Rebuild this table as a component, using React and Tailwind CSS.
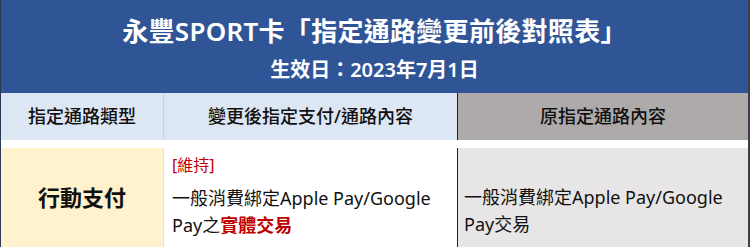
import React from "react";

const App = () => {
  return (
    <div className="w-[750px] h-[247px] overflow-hidden bg-white border-l border-l-[#2a3a55] border-r-2 border-r-[#3a3f4a] flex flex-col font-['Noto_Sans','Noto_Sans_CJK_TC',sans-serif]">
      {/* Title banner */}
      <div className="h-[93px] bg-[#2f5597] text-white flex flex-col items-center shrink-0">
        <h1 className="mt-[14px] text-[26px] leading-[35px] font-semibold tracking-[0.3px]">
          永豐SPORT卡「指定通路變更前後對照表」
        </h1>
        <p className="mt-[8px] text-[20px] leading-[26px] font-semibold">
          生效日：2023年7月1日
        </p>
      </div>

      {/* Table */}
      <div className="grid grid-cols-[162px_294px_1fr] flex-1">
        <div className="h-[47px] bg-[#dde7f3] flex items-center justify-center text-[18px] font-medium text-[#111]">
          指定通路類型
        </div>
        <div className="h-[47px] bg-[#dde7f3] border-l border-[#c5d2e2] flex items-center justify-center text-[18px] font-medium text-[#111]">
          變更後指定支付/通路內容
        </div>
        <div className="h-[47px] bg-[#aeaaaa] border-l border-[#222] flex items-center justify-center text-[18px] font-medium text-[#111]">
          原指定通路內容
        </div>

        <div className="bg-[#fff2cc] flex items-center justify-center text-[22px] font-semibold text-[#111]">
          行動支付
        </div>
        <div className="bg-white border-l border-[#e3e3e3] pl-[8px] pt-[7px] text-[#111]">
          <p className="text-[16px] leading-[20px] text-[#c00000]">[維持]</p>
          <p className="mt-[10px] text-[18px] leading-[27px]">
            一般消費綁定Apple Pay/Google
            <br />
            Pay之<span className="text-[#c00000] font-semibold">實體交易</span>
          </p>
        </div>
        <div className="bg-[#e7e5e6] border-l border-[#222] pl-[6px] pt-[36px] text-[18px] leading-[27px] text-[#111]">
          一般消費綁定Apple Pay/Google
          <br />
          Pay交易
        </div>
      </div>
    </div>
  );
};

export default App;
